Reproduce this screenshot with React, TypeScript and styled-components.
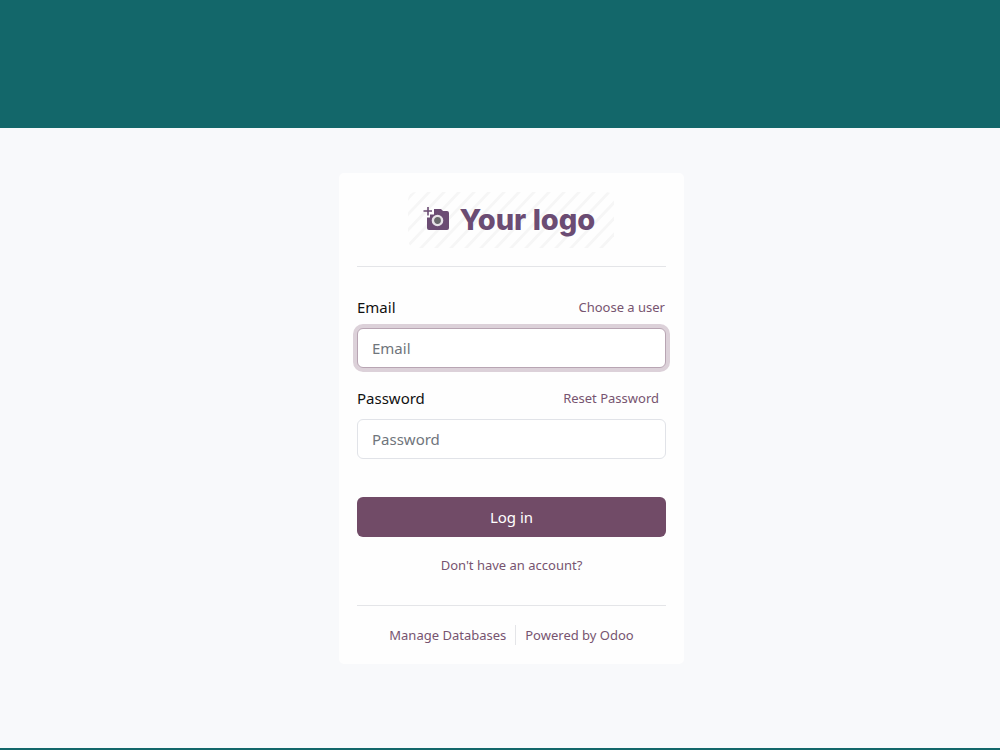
import React from 'react';
import styled, { createGlobalStyle } from 'styled-components';

const GlobalStyle = createGlobalStyle`
  *, *::before, *::after { box-sizing: border-box; }
  body {
    margin: 0;
    background: #13676a;
    color: #111;
    font: 16px/24px "Noto Sans", "Open Sans", sans-serif;
  }
`;

const Page = styled.div`
  display: flex;
  flex-direction: column;
  min-height: 100vh;
  padding-bottom: 2px;
`;

const Banner = styled.header`
  height: 128px;
  background: #13676a;
`;

const Main = styled.main`
  flex: 1;
  display: flex;
  justify-content: center;
  align-items: flex-start;
  padding: 45px 0 32px 23px;
  background: #f8f9fb;
`;

const Card = styled.section`
  width: 100%;
  max-width: 345px;
  padding: 18px;
  border-radius: 5px;
  background: #fefefe;
`;

const Brand = styled.div`
  display: flex;
  justify-content: center;
  padding-bottom: 18px;
  border-bottom: 1px solid #e4e5e8;
`;

const Logo = styled.div`
  display: grid;
  width: 208px;
  height: 57px;

  & > * { grid-area: 1 / 1; }
`;

const LogoMark = styled.div`
  display: flex;
  align-items: center;
  gap: 10px;
  padding-left: 15px;
  color: #6b4c73;
  font: 800 29px/55px Inter, sans-serif;
  white-space: nowrap;
`;

const Form = styled.form`
  display: flex;
  flex-direction: column;
  padding: 28px 0 30px;
  border-bottom: 1px solid #e4e5e8;
`;

const Field = styled.div`
  margin-bottom: 18px;
`;

const FieldHead = styled.div<{ $inset?: number }>`
  display: flex;
  justify-content: space-between;
  align-items: center;
  height: 24px;
  margin-bottom: 9px;
  padding-right: ${({ $inset = 1 }) => $inset}px;
`;

const Label = styled.label`
  font-size: 15px;
`;

const Link = styled.a`
  color: #775470;
  font-size: 13px;
  line-height: 20px;
  text-decoration: none;
`;

const Input = styled.input<{ $active?: boolean }>`
  display: block;
  width: 100%;
  height: 40px;
  padding: 0 14px;
  border: 1px solid ${({ $active }) => ($active ? '#b8a5b3' : '#e1e3e8')};
  border-radius: 6px;
  outline: none;
  background: #fff;
  box-shadow: ${({ $active }) => ($active ? '0 0 0 4px #dcd1d9' : 'none')};
  color: #374151;
  font: inherit;
  font-size: 15px;

  &::placeholder { color: #70757c; opacity: 1; }
`;

const Submit = styled.button`
  height: 40px;
  margin: 20px 0 18px;
  border: 0;
  border-radius: 6px;
  background: #714b67;
  color: #fff;
  font: inherit;
  font-size: 15px;
  cursor: pointer;
`;

const SignUp = styled.div`
  display: flex;
  justify-content: center;
`;

const Footer = styled.footer`
  display: flex;
  justify-content: center;
  padding: 19px 0 1px;
`;

const FooterLink = styled(Link)`
  padding: 0 9px;

  & + & { border-left: 1px solid #e4e5e8; }
`;

const Stripes = () => (
  <svg width="208" height="57" viewBox="0 0 208 57" aria-hidden="true">
    <defs>
      <clipPath id="logo-area"><rect width="206" height="56" y="1" rx="8" /></clipPath>
    </defs>
    <g clipPath="url(#logo-area)" stroke="#f6f6f6" strokeWidth="2.8">
      {Array.from({ length: 19 }, (_, i) => (
        <path key={i} d={`M${i * 15 - 48} 58 L${i * 15 + 8} -1`} />
      ))}
    </g>
  </svg>
);

const CameraIcon = () => (
  <svg width="27" height="25" viewBox="0 0 27 25" aria-hidden="true">
    <path
      fill="#6b4c73"
      d="M11 2h7l2 2h4q2 0 2 2v15q0 2-2 2H6q-2 0-2-2V10.500h3V7.500h4z"
    />
    <path stroke="#6b4c73" strokeWidth="1.6" d="M5 0v8.500M.5 4h8.500" />
    <circle cx="14.500" cy="13.500" r="4.600" fill="#68696b" stroke="#e6e2e7" strokeWidth="2.400" />
  </svg>
);

export default function App() {
  return (
    <>
      <GlobalStyle />
      <Page>
        <Banner />
        <Main>
          <Card>
            <Brand>
              <Logo>
                <Stripes />
                <LogoMark>
                  <CameraIcon />
                  <span>Your logo</span>
                </LogoMark>
              </Logo>
            </Brand>
            <Form onSubmit={(e) => e.preventDefault()}>
              <Field>
                <FieldHead>
                  <Label htmlFor="email">Email</Label>
                  <Link href="#users">Choose a user</Link>
                </FieldHead>
                <Input id="email" type="text" placeholder="Email" $active />
              </Field>
              <Field>
                <FieldHead $inset={7}>
                  <Label htmlFor="password">Password</Label>
                  <Link href="#reset">Reset Password</Link>
                </FieldHead>
                <Input id="password" type="password" placeholder="Password" />
              </Field>
              <Submit type="submit">Log in</Submit>
              <SignUp>
                <Link href="#signup">Don't have an account?</Link>
              </SignUp>
            </Form>
            <Footer>
              <FooterLink href="#databases">Manage Databases</FooterLink>
              <FooterLink href="#odoo">Powered by Odoo</FooterLink>
            </Footer>
          </Card>
        </Main>
      </Page>
    </>
  );
}
